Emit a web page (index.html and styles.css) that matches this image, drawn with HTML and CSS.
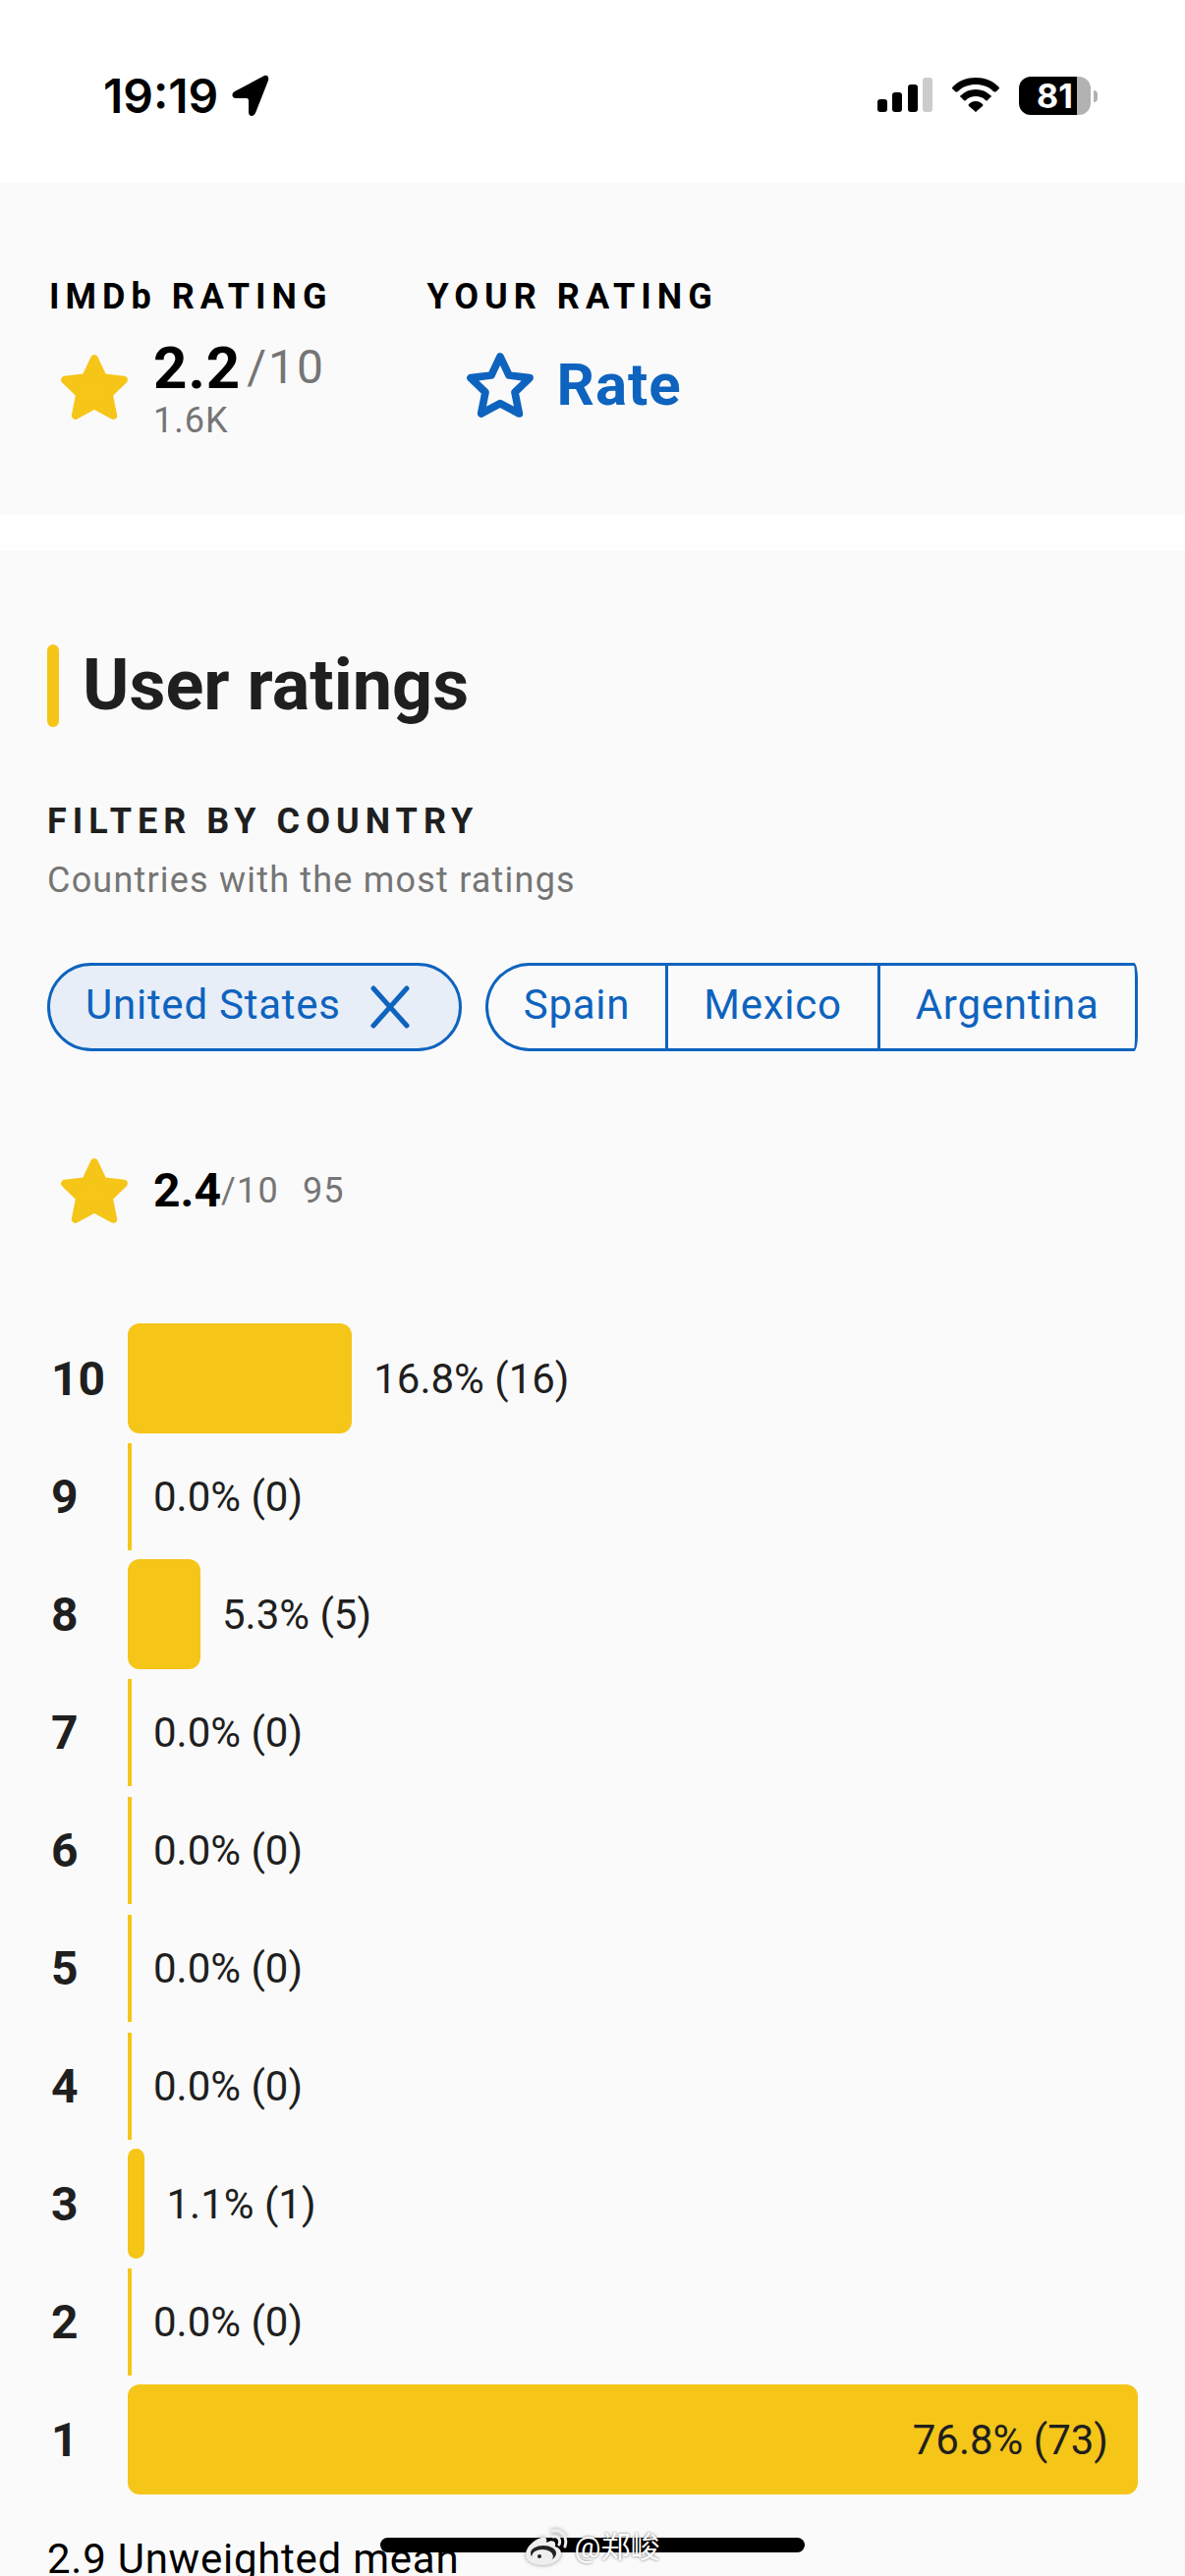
FILE: index.html
```html
<!DOCTYPE html>
<html lang="en">
<head>
  <meta charset="UTF-8">
  <meta name="viewport" content="width=device-width, initial-scale=1.0">
  <title>User ratings</title>

  <link rel="stylesheet" href="styles.css">
</head>

<body>
  <div class="screen">
    <header class="status-bar">
      <div class="status-left">
        <span class="clock">19:19</span>
        <svg class="location-icon" viewBox="0 0 38 43" aria-hidden="true">
          <path d="M33 1 3 17C-1 19 0 24 4 24H15C16 24 17 25 17 26V38C17 43 22 43 24 39L37 6C38 2 36 0 33 1Z"/>
        </svg>
      </div>
      <div class="status-right">
        <svg class="signal-icon" viewBox="0 0 56 36" aria-hidden="true">
          <rect x="0" y="22" width="10" height="13" rx="3"/>
          <rect x="15" y="15" width="10" height="20" rx="3"/>
          <rect x="31" y="7" width="10" height="28" rx="3"/>
          <rect class="signal-off" x="46" y="0" width="10" height="35" rx="3"/>
        </svg>
        <svg class="wifi-icon" viewBox="0 0 48 36" aria-hidden="true">
          <path d="M24 0C15 0 7 3 1 9Q-1 11 1 12L3 14Q4 15 6 14C11 9 17 7 24 7S37 9 42 14Q44 15 45 14L47 12Q49 11 47 9C41 3 33 0 24 0Z"/>
          <path d="M24 12C18 12 13 14 9 18Q7 19 9 20L12 23Q13 24 14 23C17 20 20 19 24 19S31 20 34 23Q35 24 36 23L39 20Q41 19 39 18C35 14 30 12 24 12Z"/>
          <path d="M24 24C21 24 19 25 17 27Q16 28 17 29L23 34Q24 36 25 34L31 29Q32 28 31 27C29 25 27 24 24 24Z"/>
        </svg>
        <div class="battery"><span class="battery-level">81</span></div>
      </div>
    </header>

    <section class="rating-summary">
      <div class="rating-block">
        <h2 class="overline">IMDb RATING</h2>
        <div class="rating-row">
          <svg class="star" viewBox="0 0 204 198" aria-hidden="true"><path d="M102 12 129 69 192 77 147 121 160 186 102 155 44 186 57 121 12 77 75 69Z"/></svg>
          <div class="score-box">
            <div class="score"><strong>2.2</strong><span class="out-of">/10</span></div>
            <div class="votes">1.6K</div>
          </div>
        </div>
      </div>
      <div class="rating-block">
        <h2 class="overline">YOUR RATING</h2>
        <button type="button" class="rate-button">
          <svg class="star star-outline" viewBox="0 0 204 198" aria-hidden="true"><path d="M102 12 129 69 192 77 147 121 160 186 102 155 44 186 57 121 12 77 75 69Z"/></svg>
          Rate
        </button>
      </div>
    </section>

    <main class="user-ratings">
      <h1 class="title">User ratings</h1>

      <h2 class="overline">FILTER BY COUNTRY</h2>
      <p class="hint">Countries with the most ratings</p>

      <div class="chips">
        <button type="button" class="chip chip-selected">
          United States
          <svg class="close-icon" viewBox="0 0 40 40" aria-hidden="true"><path d="M3 1 37 39M37 1 3 39"/></svg>
        </button>
        <div class="chip-group">
          <button type="button" class="chip">Spain</button>
          <button type="button" class="chip">Mexico</button>
          <button type="button" class="chip">Argentina</button>
        </div>
      </div>

      <div class="country-rating">
        <svg class="star" viewBox="0 0 204 198" aria-hidden="true"><path d="M102 12 129 69 192 77 147 121 160 186 102 155 44 186 57 121 12 77 75 69Z"/></svg>
        <div class="country-score"><strong>2.4</strong><span class="small">/10</span><span class="small count">95</span></div>
      </div>

      <!-- bar widths are relative to the most voted score -->
      <ol class="histogram">
        <li class="row"><span class="label">10</span><div class="track"><div class="bar" style="width: 22.2%"></div><span class="value">16.8% (16)</span></div></li>
        <li class="row"><span class="label">9</span><div class="track"><div class="bar empty"></div><span class="value">0.0% (0)</span></div></li>
        <li class="row"><span class="label">8</span><div class="track"><div class="bar" style="width: 7.2%"></div><span class="value">5.3% (5)</span></div></li>
        <li class="row"><span class="label">7</span><div class="track"><div class="bar empty"></div><span class="value">0.0% (0)</span></div></li>
        <li class="row"><span class="label">6</span><div class="track"><div class="bar empty"></div><span class="value">0.0% (0)</span></div></li>
        <li class="row"><span class="label">5</span><div class="track"><div class="bar empty"></div><span class="value">0.0% (0)</span></div></li>
        <li class="row"><span class="label">4</span><div class="track"><div class="bar empty"></div><span class="value">0.0% (0)</span></div></li>
        <li class="row"><span class="label">3</span><div class="track"><div class="bar" style="width: 1.7%"></div><span class="value">1.1% (1)</span></div></li>
        <li class="row"><span class="label">2</span><div class="track"><div class="bar empty"></div><span class="value">0.0% (0)</span></div></li>
        <li class="row"><span class="label">1</span><div class="track"><div class="bar full" style="width: 100%"><span class="value">76.8% (73)</span></div></div></li>
      </ol>

      <p class="mean">2.9 Unweighted mean</p>
    </main>

    <div class="home-indicator"></div>
    <div class="watermark">
      <svg class="weibo-icon" viewBox="0 0 44 38" aria-hidden="true">
        <path class="weibo-body" d="M16 9C8 11 0 19 0 26C0 33 8 37 17 37C28 37 36 31 36 25C36 21 33 19 30 18C31 14 29 10 21 14C22 10 21 8 16 9Z"/>
        <ellipse class="weibo-eye" cx="18" cy="25" rx="13" ry="8"/>
        <ellipse class="weibo-body" cx="17" cy="28" rx="11" ry="7"/>
        <circle class="weibo-eye" cx="14" cy="28" r="2"/>
        <path class="weibo-wave" d="M28 8C33 7 36 11 34 16M27 2C37 0 43 8 40 18"/>
      </svg>
      <span>@郑峻</span>
    </div>
  </div>
</body>
</html>
```

FILE: styles.css
```css
* {
  box-sizing: border-box;
}

body {
  margin: 0;
  background-color: #fff;
  color: #1f1f1f;
  font-family: Roboto, "Noto Sans CJK SC", sans-serif;
}

h1, h2, p, ol {
  margin: 0;
  padding: 0;
}

button {
  margin: 0;
  border: none;
  background: none;
  color: #0e63be;
  font-family: inherit;
  cursor: pointer;
}

.screen {
  position: relative;
  height: 100vh;
  overflow: hidden;
}

/* status bar */
.status-bar {
  display: flex;
  justify-content: space-between;
  height: 186px;
  padding: 76px 89px 0 105px;
}

.status-left, .status-right {
  display: flex;
  align-items: center;
  height: 42px;
}

.status-left {
  gap: 14px;
}

.status-right {
  gap: 20px;
}

.clock {
  color: #000;
  font-family: Inter, sans-serif;
  font-size: 48px;
  font-weight: 600;
}

.location-icon {
  width: 38px;
  height: 43px;
}

.signal-icon {
  width: 56px;
  height: 36px;
}

.signal-off {
  fill: #ccc;
}

.wifi-icon {
  width: 48px;
  height: 36px;
}

.battery {
  position: relative;
  width: 73px;
  height: 39px;
  margin-right: 7px;
  border-radius: 12px;
  background: linear-gradient(to right, #000 81%, #b2b2b2 81%);
  color: #fff;
  text-align: center;
}

.battery::after {
  content: "";
  position: absolute;
  top: 14px;
  right: -7px;
  width: 4px;
  height: 12px;
  border-radius: 0 4px 4px 0;
  background-color: #b2b2b2;
}

.battery-level {
  font-family: Inter, sans-serif;
  font-size: 34px;
  font-weight: 700;
  line-height: 39px;
}

/* ratings on top */
.rating-summary {
  display: flex;
  gap: 96px;
  padding: 92px 48px 72px 50px;
  margin-bottom: 36px;
  background-color: #fafafa;
  color: #000;
}

.overline {
  font-size: 36px;
  font-weight: 700;
  line-height: 48px;
  letter-spacing: 6px;
}

.star {
  flex: none;
  width: 68px;
  height: 66px;
  fill: #f5c518;
  stroke: #f5c518;
  stroke-width: 23;
  stroke-linejoin: round;
}

.star-outline {
  fill: none;
  stroke: #0e63be;
}

.rating-row {
  display: flex;
  gap: 26px;
  padding: 20px 0 0 12px;
}

.rating-row .star {
  margin-top: 15px;
}

.score {
  display: flex;
  gap: 6px;
  font-size: 60px;
  line-height: 58px;
  letter-spacing: 1px;
}

.out-of {
  color: #757575;
  font-size: 48px;
  line-height: 56px;
  letter-spacing: 2px;
}

.votes {
  color: #757575;
  font-size: 36px;
  line-height: 48px;
  letter-spacing: 1px;
}

.rate-button {
  display: flex;
  align-items: center;
  gap: 24px;
  padding: 30px 0 0 40px;
  font-size: 60px;
  font-weight: 700;
  line-height: 72px;
  letter-spacing: 1px;
}

/* user ratings */
.user-ratings {
  padding: 96px 48px 0;
  background-color: #fafafa;
}

.title {
  position: relative;
  margin-bottom: 72px;
  padding-left: 36px;
  font-size: 72px;
  font-weight: 700;
  line-height: 84px;
}

.title::before {
  content: "";
  position: absolute;
  top: 0;
  left: 0;
  width: 12px;
  height: 100%;
  border-radius: 6px;
  background-color: #f5c518;
}

.hint {
  margin-top: 12px;
  color: #757575;
  font-size: 36px;
  line-height: 48px;
  letter-spacing: 0.0333em;
}

.chips {
  display: flex;
  gap: 24px;
  margin-top: 60px;
}

.chip {
  display: flex;
  align-items: center;
  height: 90px;
  padding: 0 36px 4px;
  border: 3px solid #0e63be;
  font-size: 42px;
  line-height: 48px;
  letter-spacing: 0.0178em;
  white-space: nowrap;
}

.chip-selected {
  gap: 30px;
  padding-right: 50px;
  border-radius: 45px;
  background-color: #e7eef7;
}

.close-icon {
  width: 40px;
  height: 40px;
  margin-top: 4px;
  overflow: visible;
  fill: none;
  stroke: #0e63be;
  stroke-width: 5;
  stroke-linecap: round;
}

.chip-group {
  display: flex;
  flex: 1;
  overflow: hidden;
}

.chip-group .chip {
  border-right-width: 0;
}

.chip-group .chip:first-child {
  border-radius: 45px 0 0 45px;
}

.chip-group .chip:last-child {
  flex: 1;
  padding-right: 30px;
  border-right-width: 3px;
  border-radius: 0 4px 4px 0 / 0 16px 16px 0;
}

.country-rating {
  display: flex;
  align-items: center;
  gap: 26px;
  margin: 109px 0 98px 14px;
}

.country-score {
  display: flex;
  align-items: center;
  color: #000;
  font-size: 48px;
  line-height: 60px;
}

.small {
  color: #757575;
  font-size: 36px;
  letter-spacing: 0.0333em;
}

.count {
  margin-left: 24px;
}

/* histogram */
.histogram {
  list-style: none;
}

.row {
  display: flex;
  align-items: center;
  height: 120px;
}

.label {
  width: 82px;
  padding-left: 4px;
  font-size: 48px;
  font-weight: 700;
}

.track {
  display: flex;
  align-items: center;
  flex: 1;
}

.bar {
  flex: none;
  height: 112px;
  border-radius: 12px;
  background-color: #f5c518;
}

.empty {
  width: 4px;
  height: 109px;
  border-radius: 0;
}

.value {
  padding-left: 22px;
  font-size: 42px;
}

.full {
  display: flex;
  align-items: center;
  justify-content: flex-end;
  padding-right: 30px;
}

.mean {
  padding: 32px 0;
  color: #000;
  font-size: 42px;
  line-height: 60px;
  letter-spacing: 0.0178em;
}

/* phone overlays */
.home-indicator {
  position: absolute;
  bottom: 24px;
  left: 50%;
  width: 432px;
  height: 15px;
  margin-left: -216px;
  border-radius: 8px;
  background-color: #000;
}

.watermark {
  position: absolute;
  right: 0;
  bottom: 10px;
  left: 0;
  display: flex;
  align-items: center;
  justify-content: center;
  gap: 6px;
  color: #fff;
  font-size: 30px;
  line-height: 38px;
  text-shadow: 0 0 3px rgba(0, 0, 0, 0.6);
}

.weibo-icon {
  width: 44px;
  height: 38px;
  filter: drop-shadow(0 0 2px rgba(0, 0, 0, 0.4));
}

.weibo-body {
  fill: #eee;
}

.weibo-eye {
  fill: #222;
}

.weibo-wave {
  fill: none;
  stroke: #eee;
  stroke-width: 3;
  stroke-linecap: round;
}
```
